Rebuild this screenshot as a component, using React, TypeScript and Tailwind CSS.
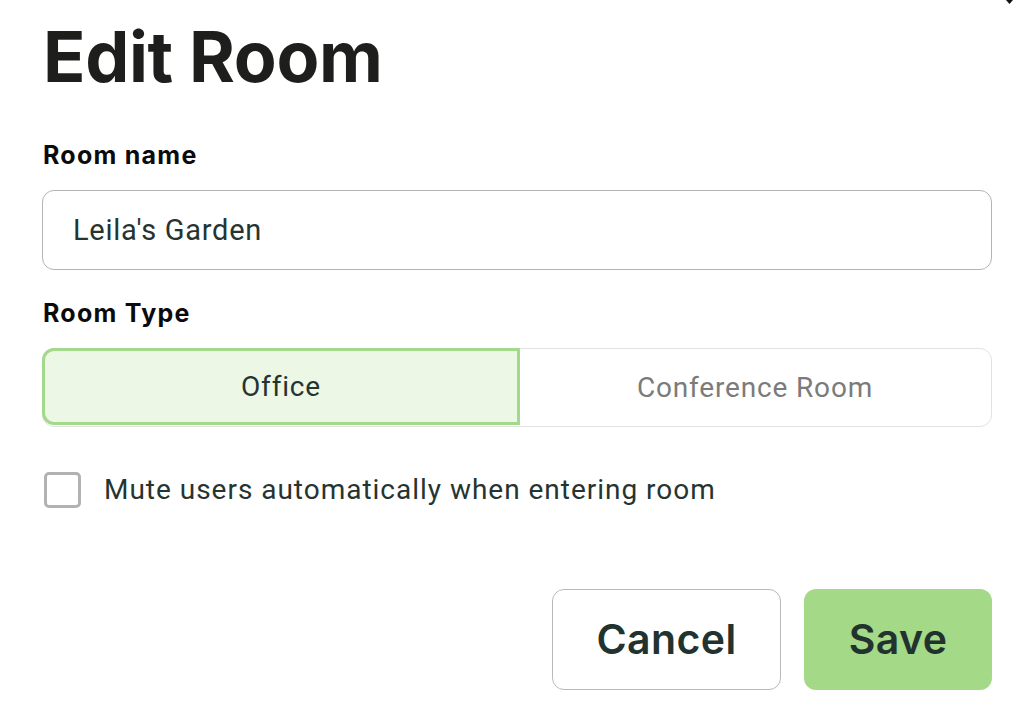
import React, { useState } from "react";

const App = () => {
  const [roomType, setRoomType] = useState("Office");
  const [muted, setMuted] = useState(false);
  const [name, setName] = useState("Leila's Garden");

  const bodyFont = { fontFamily: "'Roboto', 'Liberation Sans', sans-serif" };
  const segBase =
    "flex-1 h-full flex items-center justify-center text-[28px] tracking-[0.03em]";

  return (
    <div
      className="relative w-[1022px] h-[718px] bg-white overflow-hidden"
      style={{ fontFamily: "'Inter', 'Liberation Sans', sans-serif" }}
    >
      <svg
        className="absolute top-0 left-[1005px]"
        width="9"
        height="5"
        viewBox="0 0 9 5"
      >
        <path d="M1 0h7L4.5 4z" fill="#111" />
      </svg>

      <div className="flex flex-col pl-[42px] w-[992px]">
        <h1 className="mt-[17px] text-[70px] leading-[80px] font-bold tracking-[-0.005em] text-[#1e1e1c] pl-[1px]">
          Edit Room
        </h1>

        <label className="mt-[42px] text-[25px] leading-[32px] font-bold tracking-[0.05em] text-[#0b0b0b] pl-[1px]">
          Room name
        </label>
        <input
          value={name}
          onChange={(e) => setName(e.target.value)}
          className="mt-[19px] h-[80px] w-full rounded-[12px] border border-[#b4b4b4] px-[30px] text-[29px] tracking-[0.025em] text-[#263431] outline-none"
          style={bodyFont}
        />

        <label className="mt-[27px] text-[25px] leading-[32px] font-bold tracking-[0.05em] text-[#0b0b0b] pl-[1px]">
          Room Type
        </label>
        <div
          className="mt-[19px] h-[79px] w-full flex rounded-[12px] border border-[#e2e2e2]"
          style={bodyFont}
        >
          {["Office", "Conference Room"].map((t) => (
            <button
              key={t}
              onClick={() => setRoomType(t)}
              className={
                roomType === t
                  ? segBase +
                    " -m-px rounded-l-[12px] border-[3px] border-[#a3d98a] bg-[#ecf7e6] text-[#263431]"
                  : segBase + " text-[#7b7b7b]"
              }
            >
              {t}
            </button>
          ))}
        </div>

        <label className="mt-[42px] flex items-center gap-[23px] cursor-pointer">
          <span
            onClick={() => setMuted(!muted)}
            className="ml-[2px] w-[37px] h-[36px] rounded-[5px] border-[3px] border-[#b2b2b2] bg-white flex items-center justify-center"
          >
            {muted && (
              <svg width="22" height="22" viewBox="0 0 24 24">
                <path d="M4 12l5 5L20 6" stroke="#263431" strokeWidth="3" fill="none" />
              </svg>
            )}
          </span>
          <span className="text-[28px] tracking-[0.035em] text-[#263431]" style={bodyFont}>
            Mute users automatically when entering room
          </span>
        </label>

        <div className="mt-[78px] flex justify-end gap-[23px]">
          <button className="w-[229px] h-[101px] rounded-[12px] border border-[#b9b9b9] bg-white text-[41px] font-semibold tracking-[0.01em] text-[#22332f]">
            Cancel
          </button>
          <button className="w-[188px] h-[101px] rounded-[12px] bg-[#a3d987] text-[41px] font-semibold tracking-[0.01em] text-[#22332f]">
            Save
          </button>
        </div>
      </div>
    </div>
  );
};

export default App;
